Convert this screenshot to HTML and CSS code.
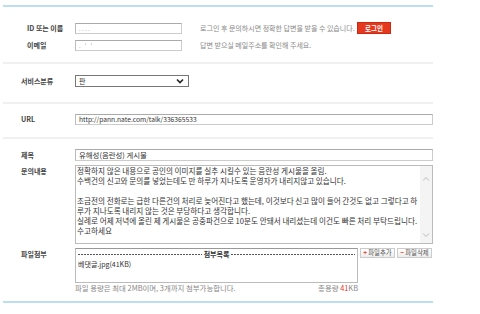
FILE: index.html
```html
<html>
<head>
<meta charset="utf-8">
<title>문의하기</title>
<link rel="stylesheet" href="styles.css">
</head>
<body>
<div class="form">
	<div class="sec login">
		<div class="row">
			<span class="lbl">ID 또는 이름</span>
			<div class="field short"><span class="mask">. . . .</span></div>
			<p class="hint">로그인 후 문의하시면 정확한 답변을 받을 수 있습니다.</p>
			<span class="btn-login">로그인</span>
		</div>
		<div class="row">
			<span class="lbl">이메일</span>
			<div class="field short"><span class="mask">.&nbsp;&nbsp;&nbsp;'&nbsp;&nbsp;&nbsp;'</span></div>
			<p class="hint">답변 받으실 메일주소를 확인해 주세요.</p>
		</div>
	</div>

	<div class="sec service">
		<div class="row">
			<span class="lbl">서비스분류</span>
			<div class="select">
				<span>판</span>
				<svg width="8" height="6" viewBox="0 0 8 6"><path d="M1 1.5 L4 4.5 L7 1.5" fill="none" stroke="#222" stroke-width="1.6"/></svg>
			</div>
		</div>
	</div>

	<div class="sec url">
		<div class="row">
			<span class="lbl">URL</span>
			<div class="field wide link">http://pann.nate.com/talk/336365533</div>
		</div>
	</div>

	<div class="sec content">
		<div class="row">
			<span class="lbl">제목</span>
			<div class="field wide title">유해성(음란성) 게시물</div>
		</div>
		<div class="row top">
			<span class="lbl">문의내용</span>
			<div class="area">
				<div class="area-text">정확하지 않은 내용으로 공인의 이미지를 실추 시킬수 있는 음란성 게시물을 올림.<br>수백건의 신고와 문의를 넣었는데도 만 하루가 지나도록 운영자가 내리지않고 있습니다.<br><br>조금전의 전화로는 급한 다른건의 처리로 늦어진다고 했는데, 이것보다 신고 많이 들어 간것도 없고 그렇다고 하<br>루가 지나도록 내리지 않는 것은 부당하다고 생각합니다.<br>실례로 어제 저녁에 올린 제 게시물은 공중파건으로 10분도 안돼서 내리셨는데 이건도 빠른 처리 부탁드립니다.<br>수고하세요</div>
				<div class="scroll">
					<svg width="8" height="6" viewBox="0 0 8 6"><path d="M1 4.5 L4 1.5 L7 4.5" fill="none" stroke="#bbb" stroke-width="1"/></svg>
					<svg width="8" height="6" viewBox="0 0 8 6"><path d="M1 1.5 L4 4.5 L7 1.5" fill="none" stroke="#bbb" stroke-width="1"/></svg>
				</div>
			</div>
		</div>
		<div class="row top files">
			<span class="lbl">파일첨부</span>
			<div class="file-col">
				<div class="file-line">
					<div class="file-box">
						<div class="file-head">
							<span class="dash"></span>
							<b>첨부목록</b>
							<span class="dash"></span>
						</div>
						<div class="file-item">베댓글.jpg(41KB)</div>
					</div>
					<span class="btn-file"><em>+</em>파일추가</span>
					<span class="btn-file"><em>−</em>파일삭제</span>
				</div>
				<div class="file-info">
					<span>파일 용량은 최대 2MB이며, 3개까지 첨부가능합니다.</span>
					<span>총용량 <em class="size">41</em>KB</span>
				</div>
			</div>
		</div>
	</div>
</div>
</body>
</html>
```
FILE: styles.css
```css
body {
margin: 0;
background: white;
font-family: "Noto Sans CJK KR", "Liberation Sans", sans-serif;
color: #333;
}

.form {
width: 430px;
margin: 5px 0 0 3px;
border-top: 2px solid #bcdff0;
border-bottom: 2px solid #bcdff0;
}

.sec {
border-top: 2px solid #f0f0f0;
padding-left: 18px;
}

.login {
border-top: none;
padding: 15px 0 11px 24px;
}

.service {
padding-top: 11px;
padding-bottom: 15px;
}

.url {
padding-top: 10px;
padding-bottom: 12px;
}

.content {
padding-top: 10px;
padding-bottom: 8px;
}

.row {
display: flex;
align-items: center;
}

.row.top {
align-items: flex-start;
margin-top: 4px;
}

.login .row + .row {
margin-top: 6px;
}

.lbl {
width: 54px;
flex: none;
font-size: 7px;
font-weight: bold;
color: #444;
line-height: 11px;
}

.login .lbl {
width: 48px;
}

.row.top .lbl {
margin-top: 1px;
}

.files .lbl {
margin-top: 2px;
}

.field {
box-sizing: border-box;
height: 11px;
border: 1px solid #ccc;
border-top-color: #aaa;
border-left-color: #bbb;
font-size: 7.4px;
line-height: 9px;
padding-left: 3px;
color: #333;
white-space: nowrap;
overflow: hidden;
}

.short {
width: 107px;
}

.wide {
width: 358px;
}

.link {
font-size: 6.7px;
}

.title {
height: 12px;
line-height: 10px;
}

.mask {
color: #999;
font-size: 6px;
}

.hint {
margin: 0 0 0 18px;
width: 157px;
flex: none;
font-size: 7px;
color: #888;
line-height: 11px;
white-space: nowrap;
}

.btn-login {
box-sizing: border-box;
width: 34px;
height: 12px;
background: #e4391f;
border: 1px solid #c92a12;
color: white;
font-size: 6.5px;
font-weight: bold;
line-height: 10px;
text-align: center;
}

.select {
box-sizing: border-box;
width: 114px;
height: 12px;
border: 1px solid #777;
display: flex;
align-items: center;
justify-content: space-between;
padding: 0 4px 0 3px;
font-size: 7px;
line-height: 10px;
}

.area {
box-sizing: border-box;
width: 358px;
height: 79px;
border: 1px solid #bbb;
display: flex;
}

.area-text {
flex: 1;
padding: 0 2px 0 1px;
font-size: 7.6px;
line-height: 10px;
color: #333;
white-space: nowrap;
overflow: hidden;
}

.scroll {
width: 12px;
background: #f4f4f4;
display: flex;
flex-direction: column;
justify-content: space-between;
align-items: center;
padding: 10px 0 5px;
}

.file-col {
width: 358px;
}

.file-line {
display: flex;
align-items: flex-start;
}

.file-box {
box-sizing: border-box;
width: 283px;
height: 35px;
border: 1px solid #bbb;
border-top-color: #999;
padding: 0 2px;
font-size: 7px;
line-height: 10px;
}

.file-head {
display: flex;
align-items: center;
white-space: nowrap;
}

.file-head b {
padding: 0 2px;
}

.dash {
flex: 1;
height: 1px;
background: repeating-linear-gradient(90deg, #555 0 2px, transparent 2px 3px);
}

.btn-file {
box-sizing: border-box;
margin-left: 2px;
width: 35px;
height: 10px;
border: 1px solid #ccc;
background: linear-gradient(#fff, #ececec);
font-size: 6.4px;
line-height: 8px;
text-align: center;
color: #555;
white-space: nowrap;
}

.btn-file em {
font-style: normal;
font-weight: bold;
color: #e03a22;
margin-right: 1px;
}

.file-info {
width: 283px;
display: flex;
justify-content: space-between;
font-size: 7.4px;
line-height: 10px;
color: #888;
}

.size {
font-style: normal;
color: #e4391f;
}
```
